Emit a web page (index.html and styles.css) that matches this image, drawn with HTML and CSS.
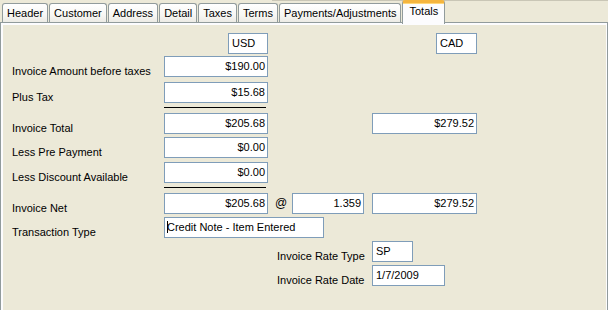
FILE: index.html
```html
<!DOCTYPE html>
<html>
<head>
<meta charset="utf-8">
<link rel="stylesheet" href="styles.css">
</head>
<body>
<div class="tabctl">
  <div class="tabs">
    <div class="tab">Header</div>
    <div class="tab">Customer</div>
    <div class="tab">Address</div>
    <div class="tab">Detail</div>
    <div class="tab">Taxes</div>
    <div class="tab">Terms</div>
    <div class="tab">Payments/Adjustments</div>
    <div class="tab active">Totals</div>
  </div>
  <div class="panel">
    <div class="page">
      <div class="form">
        <div class="f c-usd cur cur-usd">USD</div>
        <div class="f c-cad cur cur-cad">CAD</div>

        <div class="lbl c-label">Invoice Amount before taxes</div>
        <div class="f c-usd">$190.00</div>

        <div class="lbl c-label">Plus Tax</div>
        <div class="f c-usd">$15.68</div>

        <div class="rule c-usd"></div>

        <div class="lbl c-label">Invoice Total</div>
        <div class="f c-usd">$205.68</div>
        <div class="f c-cad">$279.52</div>

        <div class="lbl c-label">Less Pre Payment</div>
        <div class="f c-usd">$0.00</div>

        <div class="lbl c-label">Less Discount Available</div>
        <div class="f c-usd">$0.00</div>

        <div class="rule c-usd"></div>

        <div class="lbl c-label">Invoice Net</div>
        <div class="f c-usd">$205.68</div>
        <div class="at c-at">@</div>
        <div class="f c-rate">1.359</div>
        <div class="f c-cad">$279.52</div>

        <div class="lbl c-label">Transaction Type</div>
        <div class="f c-trans txt"><span class="caret"></span>Credit Note - Item Entered</div>

        <div class="lbl c-sub">Invoice Rate Type</div>
        <div class="f c-cad txt rtype">SP</div>

        <div class="lbl c-sub">Invoice Rate Date</div>
        <div class="f c-cad txt rdate">1/7/2009</div>
      </div>
    </div>
  </div>
</div>
</body>
</html>
```
FILE: styles.css
```css
html, body {
  margin: 0;
  padding: 0;
}
body {
  background: #ECE9D8;
  font-family: "Liberation Sans", Arial, sans-serif;
  font-size: 11px;
  color: #000;
  width: 608px;
  height: 310px;
  overflow: hidden;
}
.tabctl {
  width: 608px;
  position: relative;
}
.tabctl::before {
  content: "";
  position: absolute;
  top: 0;
  left: 272px;
  right: 0;
  height: 1px;
  background: #C9C6B6;
}
.tabs {
  display: flex;
  align-items: flex-end;
  height: 22px;
  padding-left: 2px;
  position: relative;
  z-index: 2;
}
.tab {
  height: 19px;
  box-sizing: border-box;
  padding: 0 4px;
  line-height: 18px;
  border: 1px solid #919B9C;
  border-bottom: none;
  border-radius: 3px 3px 0 0;
  background: linear-gradient(to bottom, #ffffff 0%, #f7f7f4 60%, #ecebe5 100%);
  margin-right: 1px;
  white-space: nowrap;
}
.tab.active {
  height: 24px;
  margin-bottom: -2px;
  border-top: 3px solid #F5B53E;
  border-radius: 3px 3px 0 0;
  line-height: 17px;
  padding: 0 6px 4px;
  background: #FCFCFE;
  box-shadow: inset 0 1px 0 #FFD77A;
}
.panel {
  border: 1px solid #919B9C;
  border-bottom: none;
  background: #FCFCFE;
  padding: 2px 1px 0 2px;
  position: relative;
  z-index: 1;
}
.page {
  background: #ECE9D8;
  padding: 8px 0 24px 9px;
}
.form {
  display: grid;
  grid-template-columns: 152px 104px 24px 72px 8px 105px;
  grid-template-rows: 23px 26px 25px 6px 24px 25px 25px 6px 24px 24px 24px 21px;
}
.c-label { grid-column: 1; }
.c-usd { grid-column: 2; }
.c-at { grid-column: 3; }
.c-rate { grid-column: 4; }
.c-cad { grid-column: 6; }
.c-trans { grid-column: 2 / 5; }
.c-sub { grid-column: 3 / 6; padding-left: 9px; }

.f {
  align-self: start;
  height: 21px;
  box-sizing: border-box;
  border: 1px solid #7F9DB9;
  background: #fff;
  line-height: 19px;
  padding: 0 2px;
  text-align: right;
  white-space: nowrap;
  overflow: hidden;
}
.txt {
  text-align: left;
  justify-self: start;
}
.cur {
  text-align: left;
  padding-left: 3px;
  justify-self: end;
}
.cur-usd { width: 40px; }
.cur-cad { width: 41px; }
.c-trans { width: 160px; }
.rtype { width: 41px; padding-left: 3px; }
.rdate { width: 73px; padding-left: 3px; }
.caret {
  display: inline-block;
  width: 1px;
  height: 12px;
  background: #000;
  vertical-align: -2px;
  margin-right: -1px;
}
.lbl {
  align-self: start;
  padding-top: 8px;
  line-height: 14px;
  white-space: nowrap;
}
.at {
  align-self: start;
  padding-top: 1px;
  padding-left: 2px;
  line-height: 19px;
  text-align: center;
  font-size: 12px;
}
.rule {
  align-self: start;
  width: 102px;
  height: 1px;
  background: #000;
}
```
